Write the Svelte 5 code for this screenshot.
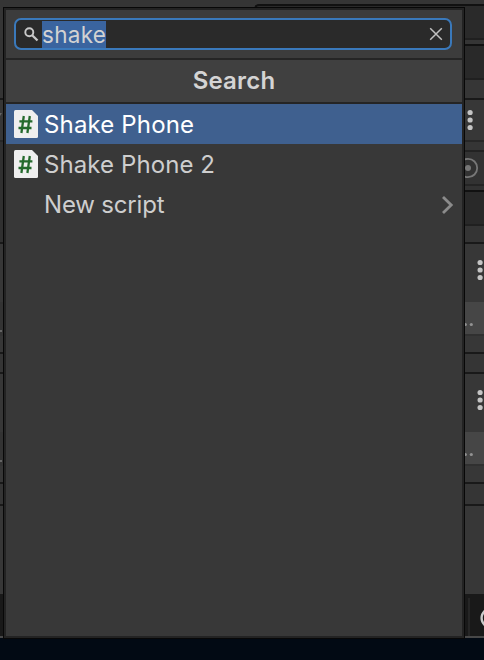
<script>
  const bands = [
    { h: 38, c: '#2a2a2a', l: '#343434', first: true },
    { h: 2, c: '#202020', l: '#343434' },
    { h: 4, c: '#353535', l: '#343434' },
    { h: 2, c: '#111111', l: '#343434' },
    { h: 32, c: '#292929', l: '#343434' },
    { h: 2, c: '#202020', l: '#343434' },
    { h: 18, c: '#363636', l: '#343434' },
    { h: 2, c: '#191919' },
    { h: 40, c: '#373737', kind: 'menu', left: 3, y: 20, arrow: true },
    { h: 2, c: '#272727' },
    { h: 8, c: '#353535', l: '#303030' },
    { h: 2, c: '#222222', l: '#303030' },
    { h: 32, c: '#323232', l: '#303030', kind: 'target' },
    { h: 2, c: '#242424', l: '#303030' },
    { h: 4, c: '#323232', l: '#303030' },
    { h: 2, c: '#111111', l: '#303030' },
    { h: 32, c: '#292929', l: '#303030' },
    { h: 2, c: '#202020', l: '#303030' },
    { h: 16, c: '#343434', l: '#303030' },
    { h: 2, c: '#191919' },
    { h: 58, c: '#373737', kind: 'menu', left: 13, y: 26 },
    { h: 32, c: '#464646', l: '#333333', kind: 'dots' },
    { h: 2, c: '#303030', l: '#333333' },
    { h: 16, c: '#373737' },
    { h: 2, c: '#191919' },
    { h: 18, c: '#353535' },
    { h: 2, c: '#191919' },
    { h: 58, c: '#373737', kind: 'menu', left: 13, y: 26 },
    { h: 32, c: '#464646', l: '#333333', kind: 'dots' },
    { h: 2, c: '#303030', l: '#333333' },
    { h: 16, c: '#373737' },
    { h: 2, c: '#191919' },
    { h: 20, c: '#353535' },
    { h: 2, c: '#191919' },
    { h: 88, c: '#373737' },
    { h: 42, c: '#191919', kind: 'status' },
    { h: 2, c: '#484848' },
    { h: 22, c: '#020a14' }
  ];
  const rows = [
    { label: 'Shake Phone', script: true, selected: true, track: 0.15 },
    { label: 'Shake Phone 2', script: true, track: 0.09 },
    { label: 'New script', more: true, track: -0.18 }
  ];
</script>

<div class="window">
  <div class="backdrop">
    {#each bands as b}
      <div class="band" class:first={b.first} style="height:{b.h}px;--fill:{b.c};--edge:{b.l ?? b.c}">
        <span class="left">
          {#if b.kind === 'dots'}
            <svg width="3" height="32"><path d="M0 28H2V30H0Z" fill="#666" /></svg>
          {:else if b.arrow}
            <svg width="3" height="40"><path d="M0 13H2L0 16Z" fill="#666" /></svg>
          {/if}
        </span>
        <span class="right">
          {#if b.kind === 'menu'}
            <svg width="19" height={b.h} fill="#c4c4c4">
              {#each [-7.5, 0, 7.5] as dy}
                <circle cx={b.left + 2.1} cy={b.y + dy} r="2.6" />
              {/each}
            </svg>
          {:else if b.kind === 'target'}
            <svg width="19" height="32" fill="none" stroke="#777" stroke-width="1.8">
              <circle cx="3" cy="16" r="9.2" /><circle cx="3" cy="16" r="3" fill="#777" stroke="none" />
            </svg>
          {:else if b.kind === 'dots'}
            <svg width="19" height="32" fill="#929292">
              <circle cx="0.3" cy="22.5" r="1.6" /><circle cx="6.3" cy="22.5" r="1.6" />
            </svg>
          {:else if b.kind === 'status'}
            <svg width="19" height="42" fill="none">
              <path d="M4 4V42" stroke="#262626" stroke-width="2" />
              <circle cx="26" cy="24" r="9.4" stroke="#c9c9c9" stroke-width="2.4" />
            </svg>
          {/if}
        </span>
      </div>
    {/each}
  </div>

  <div class="popup">
    <div class="search">
      <div class="input">
        <svg class="lens" width="16" height="16" fill="none" stroke="#c8c8c8" stroke-width="1.9">
          <circle cx="5.3" cy="6.3" r="4" /><path d="M8.2 9.2L13.5 14.5" stroke-width="2.3" />
        </svg>
        <span class="query">shake</span>
        <svg class="clear" width="14" height="14" fill="none" stroke="#c0c0c0" stroke-width="1.5">
          <path d="M1.2 1.2L12.8 12.8M12.8 1.2L1.2 12.8" />
        </svg>
      </div>
    </div>
    <div class="title">Search</div>
    <div class="list">
      {#each rows as r}
        <div class="row" class:selected={r.selected}>
          <span class="icon">
            {#if r.script}
              <svg width="24" height="28">
                <path d="M1.5 0H18L24 6V26.5Q24 28 22.5 28H1.5Q0 28 0 26.5V1.5Q0 0 1.5 0Z" fill="#efefef" />
                <path d="M9.8 6L7.4 23M15.8 6L13.4 23M5.4 11.4H18.4M4.5 18H17.5" fill="none" stroke="#246a2c" stroke-width="2.3" />
              </svg>
            {/if}
          </span>
          <span class="label" style="letter-spacing:{r.track}px">{r.label}</span>
          {#if r.more}
            <svg class="more" width="14" height="20" fill="none" stroke="#8b8b8b" stroke-width="2.8">
              <path d="M3 2L11.2 10L3 18" />
            </svg>
          {/if}
        </div>
      {/each}
    </div>
  </div>
</div>

<style>
  :global(body) {
    margin: 0;
    overflow: hidden;
  }
  .window {
    position: relative;
    width: 484px;
    height: 660px;
    overflow: hidden;
    background: #353535;
    font-family: Inter, 'Liberation Sans', sans-serif;
  }
  .backdrop {
    display: flex;
    flex-direction: column;
  }
  .band {
    display: flex;
    justify-content: space-between;
    flex: none;
    background: var(--fill);
  }
  .first {
    box-sizing: border-box;
    padding-left: 254px;
    background: #353535;
    padding-top: 4px;
  }
  .first .left {
    display: none;
  }
  .first .right {
    width: 230px;
    background: #2a2a2a;
    border-top: 2px solid #111;
    border-left: 2px solid #111;
    border-top-left-radius: 5px;
  }
  .left {
    width: 3px;
    background: var(--edge);
  }
  .right {
    width: 19px;
    overflow: hidden;
  }
  svg {
    display: block;
    flex: none;
  }
  .popup {
    position: absolute;
    left: 3px;
    top: 7px;
    width: 462px;
    height: 632px;
    box-sizing: border-box;
    border: 1px solid #080808;
    padding: 2px;
    background: #383838;
    box-shadow: inset 0 0 0 2px #232323;
    display: flex;
    flex-direction: column;
  }
  .search {
    height: 48px;
    box-sizing: border-box;
    padding: 8px 10px 8px 8px;
    background: #3c3c3c;
  }
  .input {
    height: 32px;
    box-sizing: border-box;
    border: 2px solid #3a79bb;
    border-radius: 7px;
    background: #2a2a2a;
    display: flex;
    align-items: center;
    padding: 0 7px 0 8px;
  }
  .lens {
    margin-right: 2px;
  }
  .query {
    height: 27px;
    line-height: 27px;
    width: 64px;
    margin-top: 1px;
    font-size: 22.5px;
    letter-spacing: 0.3px;
    color: #d2d2d2;
    background: #3a649f;
    white-space: nowrap;
  }
  .clear {
    margin-left: auto;
  }
  .title {
    height: 46px;
    box-sizing: border-box;
    border-top: 2px solid #252525;
    border-bottom: 2px solid #252525;
    background: #404040;
    color: #d4d4d4;
    font-size: 24px;
    font-weight: 600;
    line-height: 42px;
    letter-spacing: 0.2px;
    text-align: center;
  }
  .list {
    display: flex;
    flex-direction: column;
  }
  .row {
    height: 40px;
    display: flex;
    align-items: center;
    padding: 0 8px;
    color: #cecece;
    font-size: 24px;
  }
  .query,
  .label {
    font-weight: 370;
  }
  .selected {
    background: #3f608f;
    color: #fff;
  }
  .icon {
    width: 30px;
  }
  .label {
    line-height: 40px;
    white-space: nowrap;
    padding-top: 2px;
  }
  .more {
    margin-left: auto;
    margin-top: 2px;
  }
</style>
